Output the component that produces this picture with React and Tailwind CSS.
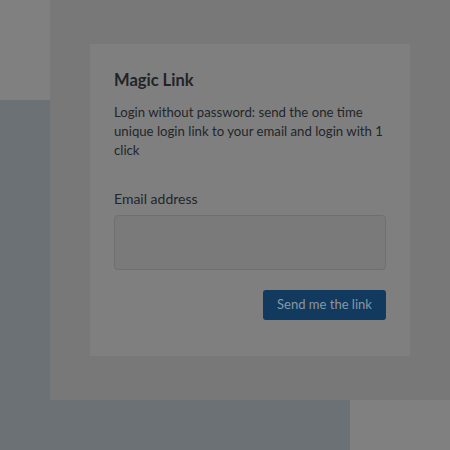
export default function App() {
  const font = { fontFamily: 'Lato, "Noto Sans", sans-serif' };
  return (
    <div className="w-[450px] h-[450px] flex flex-col overflow-hidden" style={font}>
      <div className="flex h-[400px]">
        <div className="w-[50px] flex flex-col">
          <div className="h-[100px] bg-[#808080]" />
          <div className="flex-1 bg-[#6c7175]" />
        </div>
        <div className="w-[400px] h-[400px] bg-[#787878] pl-[40px] pt-[44px]">
          <div className="w-[320px] h-[312px] bg-[#7f7f7f] px-[24px] pt-[24px]">
            <h2 className="text-[16.5px] leading-[24px] font-bold text-[#1f2428]">Magic Link</h2>
            <p className="mt-[11px] text-[13.2px] leading-[19px] text-[#22262a]">
              Login without password: send the one time unique login link to your email and login with 1 click
            </p>
            <label className="block mt-[29px] text-[14px] leading-[19px] text-[#22262a]">Email address</label>
            <div className="mt-[7px] h-[55px] rounded-[4px] border border-[#6f6f6f] bg-[#7a7a7a]" />
            <div className="flex justify-end mt-[20px]">
              <button className="w-[123px] h-[30px] rounded-[3px] bg-[#113a5e] text-[13px] text-[#8a97a3]">
                Send me the link
              </button>
            </div>
          </div>
        </div>
      </div>
      <div className="flex h-[50px]">
        <div className="w-[350px] bg-[#6c7175]" />
        <div className="w-[100px] bg-[#808080]" />
      </div>
    </div>
  );
}
